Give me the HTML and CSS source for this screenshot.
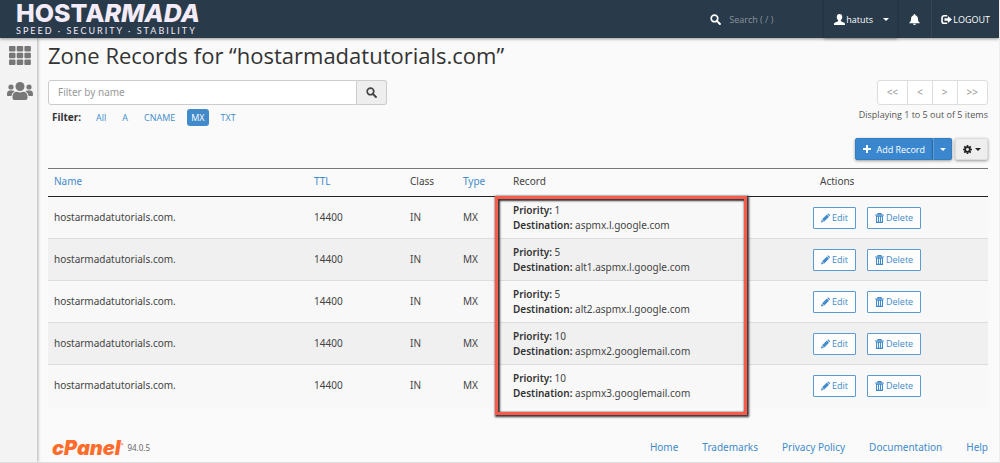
FILE: index.html
```html
<!DOCTYPE html>
<html lang="en">
<head>
  <meta charset="UTF-8">
  <meta name="viewport" content="width=device-width, initial-scale=1.0">
  <title>Zone Editor</title>
  <link rel="stylesheet" href="styles.css">
</head>
<body>

<!-- Shared icons -->
<svg class="sprite" aria-hidden="true">
  <symbol id="icon-search" viewBox="0 0 16 16">
    <circle cx="6.5" cy="6.5" r="4.8" fill="none" stroke="currentColor" stroke-width="2.4"/>
    <path d="M10 10l4.4 4.4" stroke="currentColor" stroke-width="3" stroke-linecap="round"/>
  </symbol>
  <symbol id="icon-user" viewBox="0 0 16 16">
    <path fill="currentColor" d="M8 0c2.6 0 4 1.8 4 4.4 0 2-.8 3.600-2 4.600v1.600l5 2.200c.7.4 1 1 1 1.800V16H0v-1.400c0-.8.300-1.400 1-1.800l5-2.200V9C4.800 8 4 6.400 4 4.400 4 1.800 5.400 0 8 0z"/>
  </symbol>
  <symbol id="icon-bell" viewBox="0 0 16 16">
    <path fill="currentColor" d="M8 0c.7 0 1.200.5 1.200 1.200v.5C11.600 2.300 13 4.200 13 6.800c0 3 .9 4.400 2.500 5.700v.8H.5v-.8C2.100 11.200 3 9.800 3 6.800c0-2.600 1.400-4.500 3.800-5.100v-.5C6.800.5 7.300 0 8 0zM6 14h4a2 2 0 0 1-4 0z"/>
  </symbol>
  <symbol id="icon-logout" viewBox="0 0 16 16">
    <path d="M9 2.500H4.500A3 3 0 0 0 1.500 5.500v5A3 3 0 0 0 4.500 13.500H9" fill="none" stroke="currentColor" stroke-width="2.400"/>
    <path fill="currentColor" d="M5 6.300h5V3l6 5-6 5V9.700H5z"/>
  </symbol>
  <symbol id="icon-pencil" viewBox="0 0 16 16">
    <path fill="currentColor" d="M0 16l1.200-5 3.800 3.800zM2 10.200L10.400 1.800l3.800 3.800L5.800 14zM11.200 1l.7-.6c.5-.5 1.200-.5 1.700 0l2 2c.5.5.5 1.200 0 1.700l-.6.7z"/>
  </symbol>
  <symbol id="icon-trash" viewBox="0 0 14 16">
    <path d="M4.500 2.500v-1.500h5v1.500M0 3.200h14M2.200 5.200v9.800h9.600V5.200zM5.400 5.500v9M8.600 5.500v9" fill="none" stroke="currentColor" stroke-width="1.700"/>
  </symbol>
  <symbol id="icon-gear" viewBox="0 0 16 16">
    <circle cx="8" cy="8" r="4.200" fill="none" stroke="currentColor" stroke-width="3.200"/>
    <path d="M8 0v3M8 13v3M0 8h3M13 8h3M2.300 2.300l2.200 2.200M11.500 11.500l2.200 2.200M2.300 13.700l2.200-2.200M11.500 4.500l2.200-2.200" stroke="currentColor" stroke-width="3"/>
  </symbol>
  <symbol id="icon-plus" viewBox="0 0 10 10">
    <path d="M5 0v10M0 5h10" stroke="currentColor" stroke-width="2.400"/>
  </symbol>
  <symbol id="icon-grid" viewBox="0 0 22 20">
    <g fill="currentColor">
      <rect width="6.500" height="5.500" rx="1"/><rect x="7.700" width="6.500" height="5.500" rx="1"/><rect x="15.400" width="6.500" height="5.500" rx="1"/>
      <rect y="6.700" width="6.500" height="5.500" rx="1"/><rect x="7.700" y="6.700" width="6.500" height="5.500" rx="1"/><rect x="15.400" y="6.700" width="6.500" height="5.500" rx="1"/>
      <rect y="13.400" width="6.500" height="5.500" rx="1"/><rect x="7.700" y="13.400" width="6.500" height="5.500" rx="1"/><rect x="15.400" y="13.400" width="6.500" height="5.500" rx="1"/>
    </g>
  </symbol>
  <symbol id="icon-users" viewBox="0 0 26 18">
    <g fill="currentColor">
      <circle cx="13" cy="4.500" r="4.500"/>
      <circle cx="4" cy="5" r="2.600"/>
      <circle cx="22" cy="5" r="2.600"/>
      <path d="M5.500 16v-1.500c0-3 1.800-4.700 4.500-4.700 1 .5 2 .7 3 .7s2-.2 3-.7c2.700 0 4.500 1.700 4.500 4.700V16c0 1.300-.8 2-2 2h-11c-1.200 0-2-.7-2-2z"/>
      <path d="M0 12c0-2 1-3.400 2.800-3.400h2.700c.8 0 1.500.3 2 .8C5.700 10.200 4.700 11.800 4.500 14H1c-.6 0-1-.4-1-1zM26 12c0-2-1-3.400-2.800-3.400h-2.700c-.8 0-1.500.3-2 .8 1.800.8 2.800 2.400 3 4.600H25c.6 0 1-.4 1-1z"/>
    </g>
  </symbol>
</svg>

<header class="topbar">
  <a class="brand" href="#">
    <span class="brand-name">HOSTA<i>RMADA</i></span>
    <span class="brand-tagline">SPEED · SECURITY · STABILITY</span>
  </a>
  <div class="topbar-search">
    <svg class="icon"><use href="#icon-search"/></svg>
    <input type="text" placeholder="Search ( / )" aria-label="Search">
  </div>
  <button class="user-menu" type="button"><svg class="icon"><use href="#icon-user"/></svg>hatuts<span class="caret"></span></button>
  <button class="notifications" type="button" aria-label="Notifications"><svg class="icon"><use href="#icon-bell"/></svg></button>
  <a class="logout" href="#"><svg class="icon"><use href="#icon-logout"/></svg>LOGOUT</a>
</header>

<div class="page">
  <nav class="sidebar">
    <a href="#" aria-label="Home"><svg class="icon-apps"><use href="#icon-grid"/></svg></a>
    <a href="#" aria-label="User Manager"><svg class="icon-people"><use href="#icon-users"/></svg></a>
  </nav>

  <main class="content">
    <h1>Zone Records for “hostarmadatutorials.com”</h1>

    <div class="controls">
      <div class="filters">
        <div class="name-filter">
          <input type="text" placeholder="Filter by name" aria-label="Filter by name">
          <button type="button" aria-label="Search"><svg class="icon"><use href="#icon-search"/></svg></button>
        </div>
        <div class="type-filter">
          <strong>Filter:</strong>
          <a href="#">All</a>
          <a href="#">A</a>
          <a href="#">CNAME</a>
          <a class="active" href="#">MX</a>
          <a href="#">TXT</a>
        </div>
      </div>
      <div class="paging">
        <div class="pagination">
          <button type="button">&lt;&lt;</button>
          <button type="button">&lt;</button>
          <button type="button">&gt;</button>
          <button type="button">&gt;&gt;</button>
        </div>
        <span class="count">Displaying 1 to 5 out of 5 items</span>
      </div>
    </div>

    <div class="toolbar">
      <div class="btn-group">
        <button class="btn-primary" type="button"><svg class="icon"><use href="#icon-plus"/></svg>Add Record</button>
        <button class="btn-primary btn-split" type="button" aria-label="More record types"><span class="caret"></span></button>
      </div>
      <button class="btn-settings" type="button" aria-label="Settings"><svg class="icon"><use href="#icon-gear"/></svg><span class="caret"></span></button>
    </div>

    <div class="records">
      <table class="records-table">
        <thead>
          <tr>
            <th class="col-name"><a href="#">Name</a></th>
            <th class="col-ttl"><a href="#">TTL</a></th>
            <th class="col-class">Class</th>
            <th class="col-type"><a href="#">Type</a></th>
            <th class="col-record">Record</th>
            <th class="col-actions">Actions</th>
          </tr>
        </thead>
        <tbody>
          <tr>
            <td>hostarmadatutorials.com.</td>
            <td>14400</td>
            <td>IN</td>
            <td>MX</td>
            <td><b>Priority:</b> 1<br><b>Destination:</b> aspmx.l.google.com</td>
            <td><div class="actions"><button type="button"><svg class="icon"><use href="#icon-pencil"/></svg>Edit</button><button type="button"><svg class="icon"><use href="#icon-trash"/></svg>Delete</button></div></td>
          </tr>
          <tr>
            <td>hostarmadatutorials.com.</td>
            <td>14400</td>
            <td>IN</td>
            <td>MX</td>
            <td><b>Priority:</b> 5<br><b>Destination:</b> alt1.aspmx.l.google.com</td>
            <td><div class="actions"><button type="button"><svg class="icon"><use href="#icon-pencil"/></svg>Edit</button><button type="button"><svg class="icon"><use href="#icon-trash"/></svg>Delete</button></div></td>
          </tr>
          <tr>
            <td>hostarmadatutorials.com.</td>
            <td>14400</td>
            <td>IN</td>
            <td>MX</td>
            <td><b>Priority:</b> 5<br><b>Destination:</b> alt2.aspmx.l.google.com</td>
            <td><div class="actions"><button type="button"><svg class="icon"><use href="#icon-pencil"/></svg>Edit</button><button type="button"><svg class="icon"><use href="#icon-trash"/></svg>Delete</button></div></td>
          </tr>
          <tr>
            <td>hostarmadatutorials.com.</td>
            <td>14400</td>
            <td>IN</td>
            <td>MX</td>
            <td><b>Priority:</b> 10<br><b>Destination:</b> aspmx2.googlemail.com</td>
            <td><div class="actions"><button type="button"><svg class="icon"><use href="#icon-pencil"/></svg>Edit</button><button type="button"><svg class="icon"><use href="#icon-trash"/></svg>Delete</button></div></td>
          </tr>
          <tr>
            <td>hostarmadatutorials.com.</td>
            <td>14400</td>
            <td>IN</td>
            <td>MX</td>
            <td><b>Priority:</b> 10<br><b>Destination:</b> aspmx3.googlemail.com</td>
            <td><div class="actions"><button type="button"><svg class="icon"><use href="#icon-pencil"/></svg>Edit</button><button type="button"><svg class="icon"><use href="#icon-trash"/></svg>Delete</button></div></td>
          </tr>
        </tbody>
      </table>
      <div class="highlight"></div>
    </div>

    <footer class="footer">
      <a class="cpanel" href="#">cPanel<sup>®</sup></a>
      <span class="version">94.0.5</span>
      <nav class="footer-links">
        <a href="#">Home</a>
        <a href="#">Trademarks</a>
        <a href="#">Privacy Policy</a>
        <a href="#">Documentation</a>
        <a href="#">Help</a>
      </nav>
    </footer>
  </main>
</div>

</body>
</html>
```
FILE: styles.css
```css
* {
  box-sizing: border-box;
}
body {
  margin: 0;
  min-height: 100vh;
  display: flex;
  flex-direction: column;
  font-family: 'Noto Sans', 'Open Sans', sans-serif;
  font-size: 10px;
  line-height: 15px;
  color: #444;
  background-color: #fafafa;
  border-right: 1px solid #eee;
  border-bottom: 1px solid #ddd;
}
a {
  color: #428bca;
  text-decoration: none;
}
button,
input {
  font: inherit;
  color: inherit;
  margin: 0;
  padding: 0;
}
.sprite {
  display: none;
}
.icon {
  width: 11px;
  height: 11px;
  flex: none;
}
.caret {
  border: 3px solid transparent;
  border-top-color: currentColor;
  border-bottom: 0;
}

/* Top bar */
.topbar {
  position: relative;
  z-index: 1;
  display: flex;
  height: 38px;
  font-family: 'Open Sans', sans-serif;
  font-size: 9px;
  color: #fff;
  background-color: #293a4a;
  box-shadow: 0 1px 3px rgba(0, 0, 0, 0.4);
}
.brand {
  display: flex;
  flex-direction: column;
  margin-right: auto;
  padding: 1px 0 0 16px;
  color: #f3ebf7;
}
.brand-name {
  font-family: Inter, sans-serif;
  font-size: 25px;
  line-height: 24px;
  font-weight: 800;
}
.brand-tagline {
  font-family: Lato, sans-serif;
  font-size: 9px;
  line-height: 11px;
  letter-spacing: 2px;
}
.topbar-search {
  display: flex;
  align-items: center;
  gap: 8px;
  width: 114px;
}
.topbar-search input {
  width: 90px;
  border: 0;
  background: none;
}
.topbar-search input::placeholder {
  color: #8b959e;
}
.user-menu {
  display: flex;
  align-items: center;
  gap: 1px;
  width: 73px;
  padding-left: 10px;
  border: 0;
  background: none;
  box-shadow: 0 1px 3px rgba(0, 0, 0, 0.3);
}
.user-menu .caret {
  margin-left: 9px;
}
.notifications {
  width: 35px;
  border: 0;
  border-right: 1px solid #364655;
  background: none;
}
.notifications .icon {
  display: block;
  margin: 0 auto;
}
.logout {
  display: flex;
  align-items: center;
  gap: 1px;
  padding: 0 9px;
  color: #fff;
}

/* Page */
.page {
  display: flex;
  flex: 1;
}
.sidebar {
  display: flex;
  flex-direction: column;
  align-items: center;
  gap: 16px;
  width: 37px;
  padding: 8px 0 0 3px;
  background-color: #f3f3f3;
  box-shadow: 1px 0 3px rgba(0, 0, 0, 0.3);
}
.sidebar a {
  display: flex;
  color: #777;
}
.icon-apps {
  width: 22px;
  height: 20px;
}
.icon-people {
  width: 26px;
  height: 18px;
}
.content {
  flex: 1;
  padding: 2px 11px 0;
}
h1 {
  margin: 0 0 10px;
  font-family: 'Open Sans', sans-serif;
  font-size: 22px;
  line-height: 30px;
  font-weight: 400;
  color: #333;
}

/* Filters and paging */
.controls {
  display: flex;
  justify-content: space-between;
}
.name-filter {
  display: flex;
  width: 339px;
  height: 25px;
}
.name-filter input {
  flex: 1;
  padding: 0 9px;
  border: 1px solid #ccc;
  border-radius: 3px 0 0 3px;
  background-color: #fff;
}
.name-filter input::placeholder {
  color: #999;
}
.name-filter button {
  display: flex;
  align-items: center;
  justify-content: center;
  width: 30px;
  border: 1px solid #ccc;
  border-left: 0;
  border-radius: 0 3px 3px 0;
  background-color: #eee;
}
.type-filter {
  display: flex;
  align-items: center;
  gap: 8px;
  padding: 4px;
  font-family: 'Open Sans', sans-serif;
  font-size: 9px;
}
.type-filter strong {
  margin-right: 3px;
  font-family: 'Noto Sans', sans-serif;
  font-size: 10px;
  color: #333;
}
.type-filter a {
  padding: 1px 4px;
  border-radius: 3px;
}
.type-filter .active {
  color: #fff;
  background-color: #428bca;
}
.paging {
  display: flex;
  flex-direction: column;
  align-items: flex-end;
  gap: 2px;
}
.pagination {
  display: flex;
  height: 25px;
  border: 1px solid #ddd;
  border-radius: 3px;
  background-color: #fff;
}
.pagination button {
  padding: 0 9px;
  border: 0;
  border-right: 1px solid #ddd;
  background: none;
  color: #999;
}
.pagination button:last-child {
  border-right: 0;
}
.count {
  font-family: 'Open Sans', sans-serif;
  font-size: 9px;
  color: #555;
}

/* Toolbar */
.toolbar {
  display: flex;
  justify-content: flex-end;
  gap: 3px;
  margin: 8px 0;
}
.btn-group {
  display: flex;
}
.btn-primary,
.btn-settings {
  display: flex;
  align-items: center;
  justify-content: center;
  height: 22px;
  border: 1px solid #357ebd;
  border-radius: 2px;
  font-family: 'Open Sans', sans-serif;
  font-size: 9px;
  box-shadow: 0 1px 3px rgba(0, 0, 0, 0.4);
}
.btn-primary {
  gap: 5px;
  padding: 0 7px;
  color: #fff;
  background-color: #3a87d0;
  border-radius: 2px 0 0 2px;
}
.btn-primary .icon {
  width: 8px;
  height: 8px;
}
.btn-split {
  width: 19px;
  border-left: 1px solid #5b9dd9;
  border-radius: 0 2px 2px 0;
}
.btn-settings {
  gap: 3px;
  width: 33px;
  border-color: #ddd;
  color: #222;
  background-color: #eee;
}
.btn-settings .icon {
  width: 9px;
  height: 9px;
}

/* Records */
.records {
  position: relative;
}
.records-table {
  width: 100%;
  table-layout: fixed;
  border-collapse: collapse;
  border-top: 1px solid #777;
}
.records-table th {
  height: 28px;
  padding: 0 6px 3px;
  border-bottom: 1px solid #222;
  font-weight: 400;
  text-align: left;
}
.records-table td {
  height: 42px;
  padding: 0 6px;
  border-top: 1px solid #ddd;
}
.records-table tbody tr {
  background-color: #f8f8f8;
}
.records-table tbody tr:nth-child(2n) {
  background-color: #f0f0f0;
}
.records-table tbody tr:first-child td {
  border-top-color: #222;
}
.records-table b {
  font-weight: 600;
  color: #333;
}
.col-ttl {
  width: 96px;
}
.col-class {
  width: 53px;
}
.col-type {
  width: 50px;
}
.col-record {
  width: 300px;
}
.col-actions {
  width: 181px;
}
.records-table .col-actions {
  padding-left: 13px;
}
.actions {
  display: flex;
  gap: 11px;
}
.actions button {
  display: flex;
  align-items: center;
  gap: 2px;
  height: 22px;
  padding: 0 7px;
  border: 1px solid #5b9bd5;
  border-radius: 1px;
  background-color: #fdfdfd;
  color: #428bca;
  font-family: 'Open Sans', sans-serif;
  font-size: 9px;
}
.actions .icon {
  width: 9px;
  height: 10px;
}
.highlight {
  position: absolute;
  top: 28px;
  right: 241px;
  bottom: -8px;
  width: 252px;
  border: 3px solid #fa5a4b;
  box-shadow: 1px 1px 2px 1px #333, inset 1px 1px 2px 1px #333;
  pointer-events: none;
}

/* Footer */
.footer {
  display: flex;
  align-items: center;
  padding: 30px 0 0 4px;
}
.cpanel {
  font-family: Inter, sans-serif;
  font-size: 20px;
  line-height: 22px;
  font-weight: 900;
  font-style: italic;
  color: #ff6c2c;
}
.cpanel sup {
  font-size: 4px;
  line-height: 4px;
  vertical-align: 9px;
}
.version {
  margin-left: 4px;
  font-size: 8px;
  color: #666;
}
.footer-links {
  display: flex;
  gap: 24px;
  margin-left: auto;
}
```
